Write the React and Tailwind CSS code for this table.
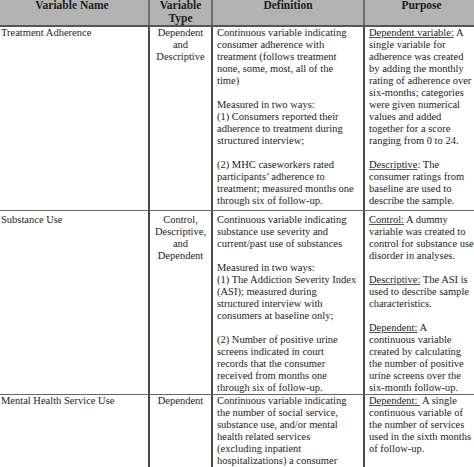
const rows = [
  {
    name: 'Treatment Adherence',
    type: ['Dependent', 'and', 'Descriptive'],
    def: [
      'Continuous variable indicating',
      'consumer adherence with',
      'treatment (follows treatment',
      'none, some, most, all of the',
      'time)',
      '',
      'Measured in two ways:',
      '(1) Consumers reported their',
      'adherence to treatment during',
      'structured interview;',
      '',
      '(2) MHC caseworkers rated',
      'participants\u2019 adherence to',
      'treatment; measured months one',
      'through six of follow-up.',
    ],
    purpose: [
      { u: 'Dependent variable:', t: ' A' },
      'single variable for',
      'adherence was created',
      'by adding the monthly',
      'rating of adherence over',
      'six-months; categories',
      'were given numerical',
      'values and added',
      'together for a score',
      'ranging from 0 to 24.',
      '',
      { u: 'Descriptive', t: ': The' },
      'consumer ratings from',
      'baseline are used to',
      'describe the sample.',
    ],
    pad: 'pb-[3px]',
  },
  {
    name: 'Substance Use',
    type: ['Control,', 'Descriptive,', 'and', 'Dependent'],
    def: [
      'Continuous variable indicating',
      'substance use severity and',
      'current/past use of substances',
      '',
      'Measured in two ways:',
      '(1) The Addiction Severity Index',
      '(ASI); measured during',
      'structured interview with',
      'consumers at baseline only;',
      '',
      '(2) Number of positive urine',
      'screens indicated in court',
      'records that the consumer',
      'received from months one',
      'through six of follow-up.',
    ],
    purpose: [
      { u: 'Control:', t: ' A dummy' },
      'variable was created to',
      'control for substance use',
      'disorder in analyses.',
      '',
      { u: 'Descriptive:', t: ' The ASI is' },
      'used to describe sample',
      'characteristics.',
      '',
      { u: 'Dependent:', t: ' A' },
      'continuous variable',
      'created by calculating',
      'the number of positive',
      'urine screens over the',
      'six-month follow-up.',
    ],
    pad: 'pt-[3px]',
  },
  {
    name: 'Mental Health Service Use',
    type: ['Dependent'],
    def: [
      'Continuous variable indicating',
      'the number of social service,',
      'substance use, and/or mental',
      'health related services',
      '(excluding inpatient',
      'hospitalizations) a consumer',
    ],
    purpose: [
      { u: 'Dependent:\u00a0', t: ' A single' },
      'continuous variable of',
      'the number of services',
      'used in the sixth months',
      'of follow-up.',
    ],
    pad: '',
  },
];

function Lines({ lines, className = '' }) {
  return (
    <div className={className}>
      {lines.map((line, i) => {
        if (line === '') return <div key={i} className="h-[12px]" />;
        if (typeof line === 'object') {
          return (
            <div key={i} className="whitespace-pre">
              <span className="underline decoration-[#555] underline-offset-[1px]">{line.u}</span>
              {line.t}
            </div>
          );
        }
        return <div key={i} className="whitespace-pre">{line}</div>;
      })}
    </div>
  );
}

export default function App() {
  return (
    <div className="w-[474px] h-[467px] overflow-hidden bg-white text-[#1c1c1c] font-['Liberation_Serif',serif]">
      {/* header */}
      <div className="grid grid-cols-[150px_63px_152px_109px] h-[27px] bg-[#b3b3b3] border-b-2 border-[#555] text-[11.5px] leading-[13px] font-bold">
        <div className="border-r-2 border-[#6e6e6e] text-center pr-1 -mt-px">Variable Name</div>
        <div className="border-r-2 border-[#6e6e6e] text-center -mt-px">
          Variable
          <br />
          Type
        </div>
        <div className="border-r-2 border-[#6e6e6e] text-center -mt-px">Definition</div>
        <div className="text-center pl-1 -mt-px">Purpose</div>
      </div>

      {rows.map((row, i) => (
        <div
          key={i}
          className="grid grid-cols-[150px_63px_152px_109px] border-b border-[#666] text-[10.5px] leading-[12px]"
        >
          <div className={`border-r-2 border-[#4a4a4a] pl-px whitespace-nowrap ${row.pad}`}>{row.name}</div>
          <Lines lines={row.type} className={`border-r-2 border-[#4a4a4a] text-center ${row.pad}`} />
          <Lines lines={row.def} className={`border-r-2 border-[#4a4a4a] pl-1 overflow-hidden ${row.pad}`} />
          <Lines lines={row.purpose} className={`pl-1 overflow-hidden ${row.pad}`} />
        </div>
      ))}
    </div>
  );
}
